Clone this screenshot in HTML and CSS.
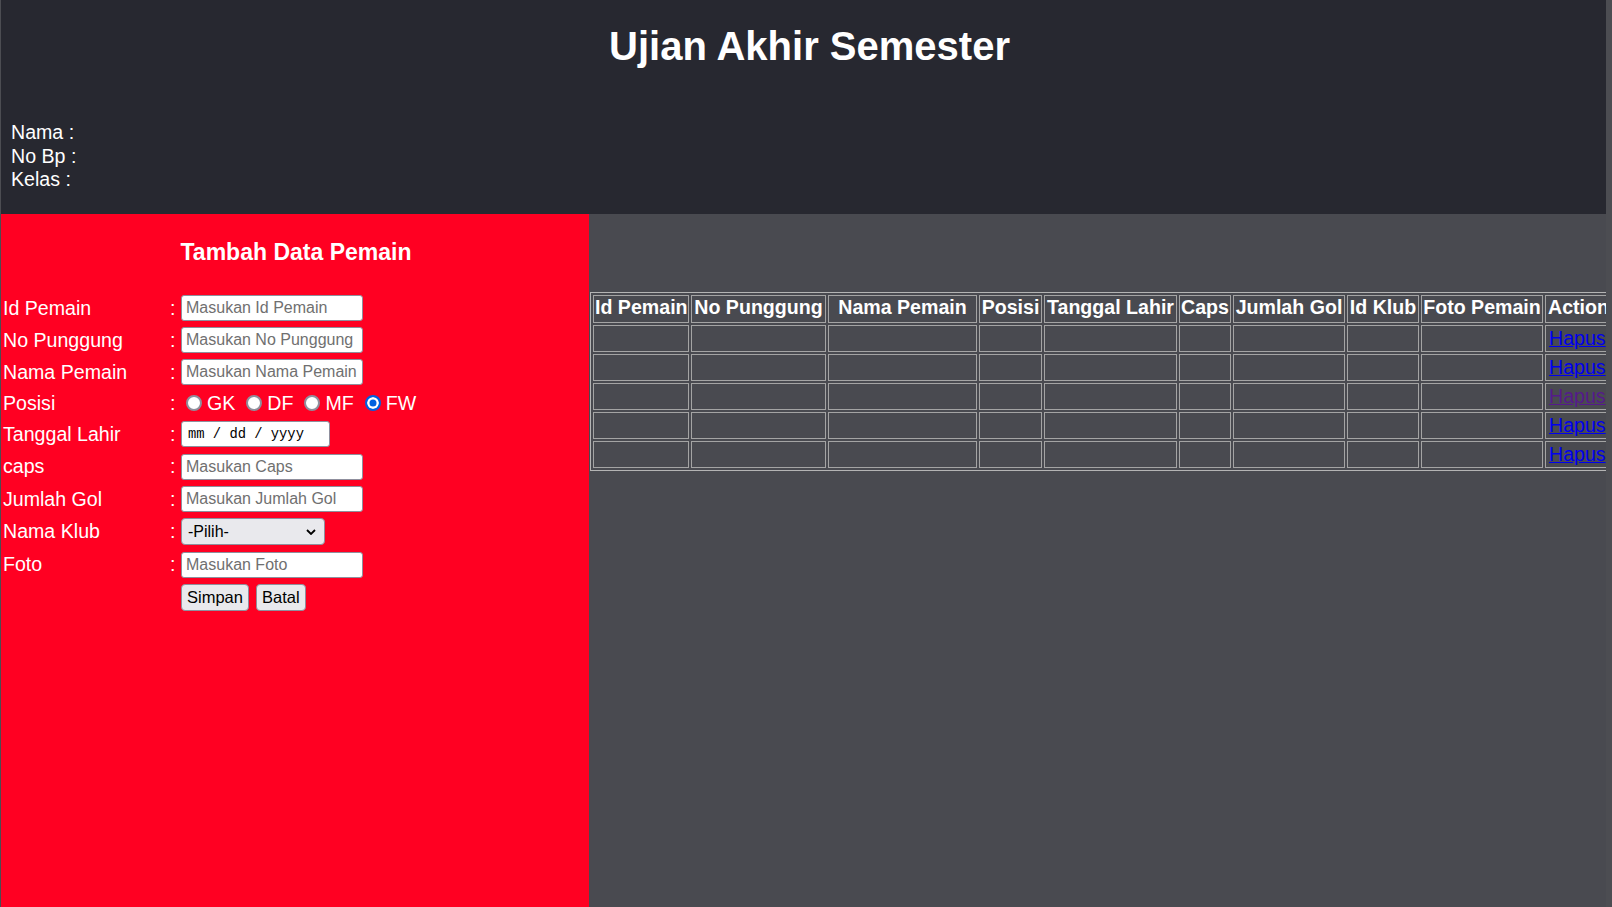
FILE: index.html
```html
<!DOCTYPE html>
<html lang="id">
<head>
<meta charset="utf-8">
<title>Ujian Akhir Semester</title>
<link rel="stylesheet" href="styles.css">
</head>
<body>
<div class="page">
  <header class="header">
    <h1 class="title">Ujian Akhir Semester</h1>
    <div class="identity">
      <div>Nama :</div>
      <div>No Bp :</div>
      <div>Kelas :</div>
    </div>
  </header>
  <main class="main">
    <section class="form-panel">
      <h3 class="form-title">Tambah Data Pemain</h3>
      <form class="form">
        <div class="row h32"><span class="lbl">Id Pemain</span><span class="colon">:</span><input class="field" type="text" placeholder="Masukan Id Pemain"></div>
        <div class="row h32"><span class="lbl">No Punggung</span><span class="colon">:</span><input class="field" type="text" placeholder="Masukan No Punggung"></div>
        <div class="row h32"><span class="lbl">Nama Pemain</span><span class="colon">:</span><input class="field" type="text" placeholder="Masukan Nama Pemain"></div>
        <div class="row h30"><span class="lbl">Posisi</span><span class="colon">:</span>
          <div class="radios">
            <label class="opt"><input class="radio" type="radio" name="posisi">GK</label>
            <label class="opt"><input class="radio" type="radio" name="posisi">DF</label>
            <label class="opt"><input class="radio" type="radio" name="posisi">MF</label>
            <label class="opt"><input class="radio" type="radio" name="posisi" checked>FW</label>
          </div>
        </div>
        <div class="row h32"><span class="lbl">Tanggal Lahir</span><span class="colon">:</span><input class="field date" type="text" value="mm / dd / yyyy" readonly></div>
        <div class="row h33"><span class="lbl">caps</span><span class="colon">:</span><input class="field" type="text" placeholder="Masukan Caps"></div>
        <div class="row h32"><span class="lbl">Jumlah Gol</span><span class="colon">:</span><input class="field" type="text" placeholder="Masukan Jumlah Gol"></div>
        <div class="row h33"><span class="lbl">Nama Klub</span><span class="colon">:</span>
          <div class="select"><span>-Pilih-</span><svg class="chev" width="10" height="6" viewBox="0 0 10 6"><path d="M1 1l4 4 4-4" fill="none" stroke="#000" stroke-width="1.8"/></svg></div>
        </div>
        <div class="row h33"><span class="lbl">Foto</span><span class="colon">:</span><input class="field" type="text" placeholder="Masukan Foto"></div>
        <div class="row h32"><span class="lbl"></span><span class="colon"></span>
          <div class="buttons"><button class="btn" type="button">Simpan</button><button class="btn" type="button">Batal</button></div>
        </div>
      </form>
    </section>
    <section class="table-panel">
      <table class="data">
        <thead>
          <tr>
            <th class="c-id">Id Pemain</th>
            <th class="c-no">No Punggung</th>
            <th class="c-nama">Nama Pemain</th>
            <th class="c-pos">Posisi</th>
            <th class="c-tgl">Tanggal Lahir</th>
            <th class="c-caps">Caps</th>
            <th class="c-gol">Jumlah Gol</th>
            <th class="c-klub">Id Klub</th>
            <th class="c-foto">Foto Pemain</th>
            <th class="c-act">Action</th>
          </tr>
        </thead>
        <tbody>
          <tr><td></td><td></td><td></td><td></td><td></td><td></td><td></td><td></td><td></td><td><a class="link" href="#">Hapus</a></td></tr>
          <tr><td></td><td></td><td></td><td></td><td></td><td></td><td></td><td></td><td></td><td><a class="link" href="#">Hapus</a></td></tr>
          <tr><td></td><td></td><td></td><td></td><td></td><td></td><td></td><td></td><td></td><td><a class="link visited" href="#">Hapus</a></td></tr>
          <tr><td></td><td></td><td></td><td></td><td></td><td></td><td></td><td></td><td></td><td><a class="link" href="#">Hapus</a></td></tr>
          <tr><td></td><td></td><td></td><td></td><td></td><td></td><td></td><td></td><td></td><td><a class="link" href="#">Hapus</a></td></tr>
        </tbody>
      </table>
    </section>
  </main>
</div>
</body>
</html>
```

FILE: styles.css
```css
* { box-sizing: border-box; }

html, body {
  margin: 0;
  padding: 0;
}

body {
  background: #4c4d52;
  font-family: "Liberation Sans", Arial, sans-serif;
  color: #fff;
  overflow: hidden;
}

.page {
  margin-left: 1px;
  width: 1605px;
  height: 907px;
  display: flex;
  flex-direction: column;
  overflow: hidden;
}

.header {
  height: 214px;
  flex: none;
  background: #272830;
}

.title {
  margin: 0;
  padding: 23px 0 0 12px;
  font-size: 40px;
  line-height: 46px;
  font-weight: bold;
  text-align: center;
}

.identity {
  margin-top: 52px;
  padding-left: 10px;
  font-size: 19.6px;
  line-height: 23.5px;
}

.main {
  flex: 1;
  display: flex;
  min-height: 0;
}

.form-panel {
  width: 588px;
  flex: none;
  background: #ff0022;
  padding: 25px 0 0 2px;
}

.form-title {
  margin: 0 0 26px;
  font-size: 23px;
  line-height: 27px;
  font-weight: bold;
  text-align: center;
}

.form {
  display: flex;
  flex-direction: column;
}

.row {
  display: grid;
  grid-template-columns: 166px 12px auto;
  align-items: center;
  font-size: 19.6px;
}
.h30 { height: 30px; }
.h31 { height: 31px; }
.h32 { height: 32px; }
.h33 { height: 33px; }

.colon { padding-left: 1px; }

.field {
  width: 182px;
  height: 26px;
  margin: 0;
  padding: 0 4px;
  border: 1px solid #8f8f9d;
  border-radius: 3px;
  background: #fff;
  font-family: "Liberation Sans", Arial, sans-serif;
  font-size: 16px;
  color: #000;
  outline: none;
}
.field::placeholder { color: #707070; }

.date {
  width: 149px;
  padding-left: 6px;
  font-family: "Liberation Mono", "Courier New", monospace;
  font-size: 13.8px;
}

.radios {
  display: flex;
  align-items: center;
  padding-left: 5px;
}

.opt {
  display: inline-flex;
  align-items: center;
  gap: 5px;
  margin-right: 11px;
}

.radio {
  appearance: none;
  -webkit-appearance: none;
  flex: none;
  width: 16px;
  height: 16px;
  min-width: 16px;
  margin: 0;
  border: 2px solid #8f8f9d;
  border-radius: 50%;
  background: #fff;
}
.radio:checked {
  border-color: #0060df;
  background: #0060df;
  box-shadow: inset 0 0 0 2.5px #fff;
}

.select {
  width: 144px;
  height: 27px;
  display: flex;
  align-items: center;
  justify-content: space-between;
  padding: 0 8px 0 6px;
  border: 1px solid #8f8f9d;
  border-radius: 4px;
  background: #e9e9ed;
  color: #000;
  font-size: 16px;
}

.chev { display: block; }

.buttons {
  display: flex;
  gap: 7px;
}

.btn {
  height: 27px;
  margin: 0;
  padding: 0 5px;
  border: 1px solid #8f8f9d;
  border-radius: 4px;
  background: #e9e9ed;
  color: #000;
  font-family: "Liberation Sans", Arial, sans-serif;
  font-size: 16.5px;
}

.table-panel {
  flex: 1;
  min-width: 0;
  background: #494a50;
  padding-top: 78px;
  overflow: hidden;
}

.data {
  margin-left: 1px;
  width: 1025px;
  table-layout: fixed;
  border-collapse: separate;
  border-spacing: 2px;
  border: 1px solid #b4b4b4;
}

.data th,
.data td {
  padding: 0 1px;
  border: 1px solid #a4a4a4;
  white-space: nowrap;
  overflow: visible;
  vertical-align: middle;
}

.data th {
  height: 28px;
  padding-bottom: 3px;
  font-size: 19.6px;
  font-weight: bold;
  text-align: center;
  color: #fff;
}

.data td {
  height: 27px;
  padding-left: 3px;
  font-size: 19.6px;
  text-align: left;
}

.c-id { width: 96px; }
.c-no { width: 135px; }
.c-nama { width: 149px; }
.c-pos { width: 63px; }
.c-tgl { width: 133px; }
.c-caps { width: 52px; }
.c-gol { width: 112px; }
.c-klub { width: 72px; }
.c-foto { width: 122px; }
.c-act { width: 67px; }

.link {
  color: #0000ee;
  text-decoration: underline;
}
.link.visited { color: #551a8b; }
```
